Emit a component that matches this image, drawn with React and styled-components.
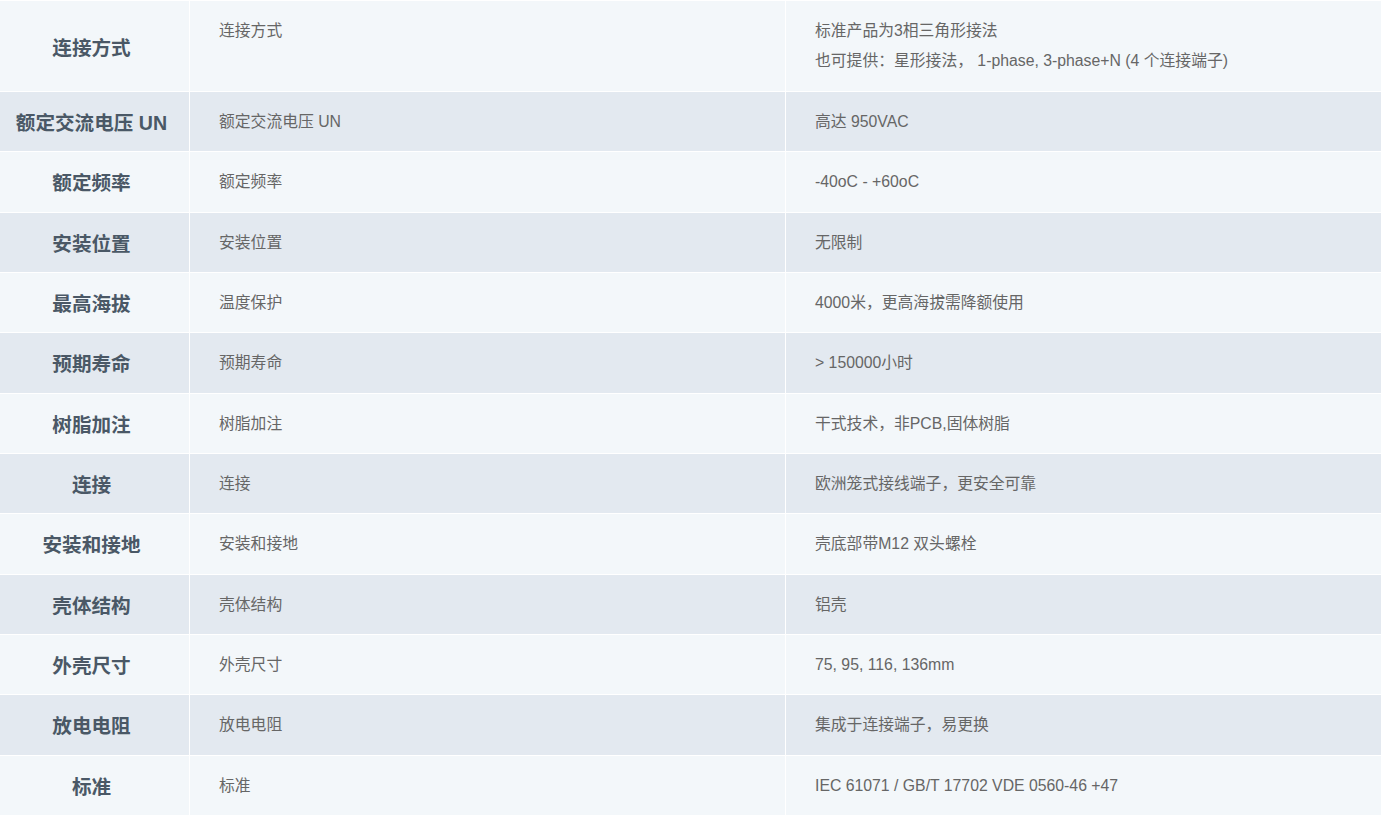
import React from "react";
import styled, { createGlobalStyle } from "styled-components";

const Global = createGlobalStyle`
  html, body { margin: 0; padding: 0; background: #ffffff; }
  body { font-family: "Liberation Sans", "Noto Sans CJK SC", Arial, sans-serif; }
`;

const Table = styled.div`
  display: flex;
  flex-direction: column;
  gap: 1px;
  padding: 1px 1px 0 0;
  background: #ffffff;
`;

const Row = styled.div`
  display: grid;
  grid-template-columns: 189px 1fr 1fr;
  gap: 1px;
  height: ${(p) => (p.$tall ? "90px" : "59.33px")};
`;

const HeadCell = styled.div`
  display: flex;
  align-items: center;
  justify-content: center;
  padding-right: 6px;
  background: ${(p) => (p.$alt ? "#e3e9f0" : "#f3f7fa")};
  color: #4a5866;
  font-size: 19.6px;
  font-weight: 700;
  white-space: nowrap;
`;

const Cell = styled.div`
  box-sizing: border-box;
  padding: 15px 29px 0 29px;
  background: ${(p) => (p.$alt ? "#e3e9f0" : "#f3f7fa")};
  color: #666666;
  font-size: 15.8px;
  line-height: 30px;
  white-space: nowrap;
`;

const rows = [
  ["连接方式", "连接方式", ["标准产品为3相三角形接法", "也可提供：星形接法， 1-phase, 3-phase+N (4 个连接端子)"]],
  ["额定交流电压 UN", "额定交流电压 UN", ["高达 950VAC"]],
  ["额定频率", "额定频率", ["-40oC - +60oC"]],
  ["安装位置", "安装位置", ["无限制"]],
  ["最高海拔", "温度保护", ["4000米，更高海拔需降额使用"]],
  ["预期寿命", "预期寿命", ["> 150000小时"]],
  ["树脂加注", "树脂加注", ["干式技术，非PCB,固体树脂"]],
  ["连接", "连接", ["欧洲笼式接线端子，更安全可靠"]],
  ["安装和接地", "安装和接地", ["壳底部带M12 双头螺栓"]],
  ["壳体结构", "壳体结构", ["铝壳"]],
  ["外壳尺寸", "外壳尺寸", ["75, 95, 116, 136mm"]],
  ["放电电阻", "放电电阻", ["集成于连接端子，易更换"]],
  ["标准", "标准", ["IEC 61071 / GB/T 17702 VDE 0560-46 +47"]],
];

export default function App() {
  return (
    <>
      <Global />
      <Table>
        {rows.map(([head, name, values], i) => {
          const alt = i % 2 === 1;
          return (
            <Row key={i} $tall={values.length > 1}>
              <HeadCell $alt={alt}>{head}</HeadCell>
              <Cell $alt={alt}>{name}</Cell>
              <Cell $alt={alt}>
                {values.map((v, j) => (
                  <div key={j}>{v}</div>
                ))}
              </Cell>
            </Row>
          );
        })}
      </Table>
    </>
  );
}
